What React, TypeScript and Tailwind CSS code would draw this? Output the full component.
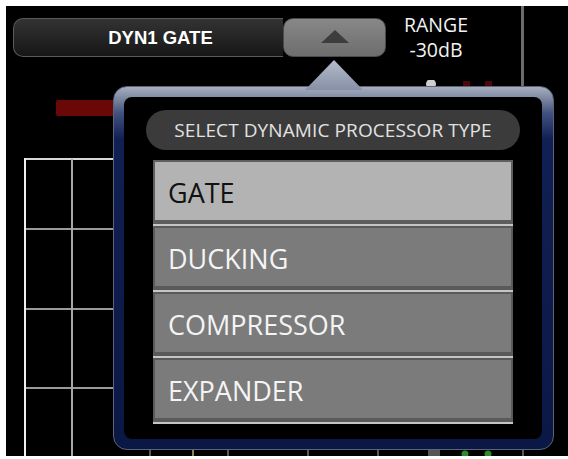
import React from "react";

const OPTIONS = ["GATE", "DUCKING", "COMPRESSOR", "EXPANDER"];

// Background graph of the dynamics screen (grid, threshold bar, meters)
const DynGraph = () => {
  const ticks = [144, 222, 302, 372, 517];
  return (
    <svg width="562" height="376" viewBox="0 0 562 376" className="block">
      {/* fader track continuing from top */}
      <rect x="515" y="0" width="3" height="10" fill="#6c6c6c" />
      {/* knob + meter leds */}
      <circle cx="425" cy="4" r="5" fill="#cfcfcf" />
      <rect x="457" y="1" width="7" height="5" fill="#4a0808" />
      <rect x="479" y="1" width="7" height="5" fill="#4a0808" />
      {/* threshold bar */}
      <rect x="50" y="20" width="62" height="16" rx="2" fill="#6a0808" />
      {/* grid */}
      <g strokeWidth="2">
        <line x1="19" y1="79" x2="110" y2="79" stroke="#d8d8d8" />
        <line x1="19" y1="149" x2="110" y2="149" stroke="#9a9a9a" />
        <line x1="19" y1="229" x2="110" y2="229" stroke="#9a9a9a" />
        <line x1="19" y1="308" x2="110" y2="308" stroke="#9a9a9a" />
        <line x1="19" y1="78" x2="19" y2="376" stroke="#f0f0f0" />
        <line x1="66" y1="79" x2="66" y2="376" stroke="#a8a8a8" />
      </g>
      {/* bottom ticks */}
      {ticks.map((x) => (
        <line key={x} x1={x} y1="368" x2={x} y2="376" stroke="#777" strokeWidth="1.5" />
      ))}
      <line x1="187" y1="368" x2="187" y2="376" stroke="#b8b070" strokeWidth="1.5" />
      <rect x="422" y="370" width="12" height="6" fill="#555" />
      <circle cx="459" cy="374" r="3.5" fill="#2f8a2f" />
      <circle cx="482" cy="374" r="3.5" fill="#2f8a2f" />
    </svg>
  );
};

const TypePopover = () => {
  return (
    <div className="absolute left-[107px] top-[80px] w-[441px] h-[364px] rounded-[14px] border border-[#5d6479] pt-[10px] pl-[10px] pr-[11px] pb-[10px] bg-[linear-gradient(to_bottom,#a6aebf_0px,#7f8aa2_11px,#42527f_26px,#102052_52px,#0b1846_100%)]">
      {/* pointer */}
      <svg
        width="58"
        height="30"
        viewBox="0 0 58 30"
        className="absolute left-[191px] top-[-27px]"
      >
        <defs>
          <linearGradient id="ptr" x1="0" y1="0" x2="0" y2="1">
            <stop offset="0" stopColor="#b4bccb" />
            <stop offset="1" stopColor="#8790a6" />
          </linearGradient>
        </defs>
        <polygon points="29,0 58,30 0,30" fill="url(#ptr)" />
      </svg>

      <div className="h-full w-full rounded-[8px] bg-black pt-[13px] flex flex-col">
        <div className="mx-[22px] h-[40px] rounded-full bg-[#3b3b3b] flex items-center justify-center font-['Open_Sans',sans-serif] text-[19px] text-[#e2e2e2] tracking-[0.1px]">
          SELECT DYNAMIC PROCESSOR TYPE
        </div>

        <div className="mt-[10px] mx-[29px] flex flex-col">
          {OPTIONS.map((opt, i) => {
            const active = i === 0;
            return (
              <div key={opt} className="flex flex-col">
                <button
                  className={
                    active
                      ? "h-[64px] border-2 border-b-4 border-[#5e5e5e] bg-[#b3b3b3] text-[#111] flex items-center pl-[13px] pt-[2px] font-['Open_Sans',sans-serif] text-[27px] leading-none text-left"
                      : "h-[64px] border-2 border-b-4 border-[#5a5a5a] bg-[#7b7b7b] text-[#f4f4f4] flex items-center pl-[13px] pt-[2px] font-['Open_Sans',sans-serif] text-[27px] leading-none text-left"
                  }
                >
                  {opt}
                </button>
                <div className="h-[2px] bg-[#c6c6c6]" />
              </div>
            );
          })}
        </div>
      </div>
    </div>
  );
};

export default function App() {
  return (
    <div className="w-[568px] h-[459px] bg-white pt-[6px] pl-[6px] pb-[3px]">
      <div className="relative w-[562px] h-[450px] bg-black overflow-hidden">
        {/* top row */}
        <div className="flex items-start h-[74px]">
          <div className="mt-[12px] ml-[7px] w-[270px] h-[39px] rounded-l-[10px] border border-r-0 border-[#5a5a5a] bg-[linear-gradient(to_bottom,#333_0%,#262626_45%,#161616_100%)] flex items-center justify-center pl-[24px] pt-[2px] font-['Liberation_Sans',Arial,sans-serif] font-bold text-[18.5px] leading-none text-white">
            DYN1 GATE
          </div>
          <button className="mt-[12px] w-[103px] h-[39px] rounded-[10px] border border-[#4a4a4a] bg-[linear-gradient(to_bottom,#888_0%,#7a7a7a_50%,#6e6e6e_100%)] flex items-center justify-center">
            <svg width="28" height="13" viewBox="0 0 28 13" className="-mt-[2px]">
              <polygon points="14,0 28,13 0,13" fill="#3d3d3d" />
            </svg>
          </button>
          <div className="mt-[6px] ml-[15px] w-[70px] flex flex-col items-center font-['Open_Sans',sans-serif] text-[19.5px] leading-[25px] text-[#f2f2f2]">
            <span>RANGE</span>
            <span>-30dB</span>
          </div>
          <div className="ml-[50px] w-[3px] self-stretch bg-[#6c6c6c]" />
        </div>

        <DynGraph />

        <TypePopover />
      </div>
    </div>
  );
}
